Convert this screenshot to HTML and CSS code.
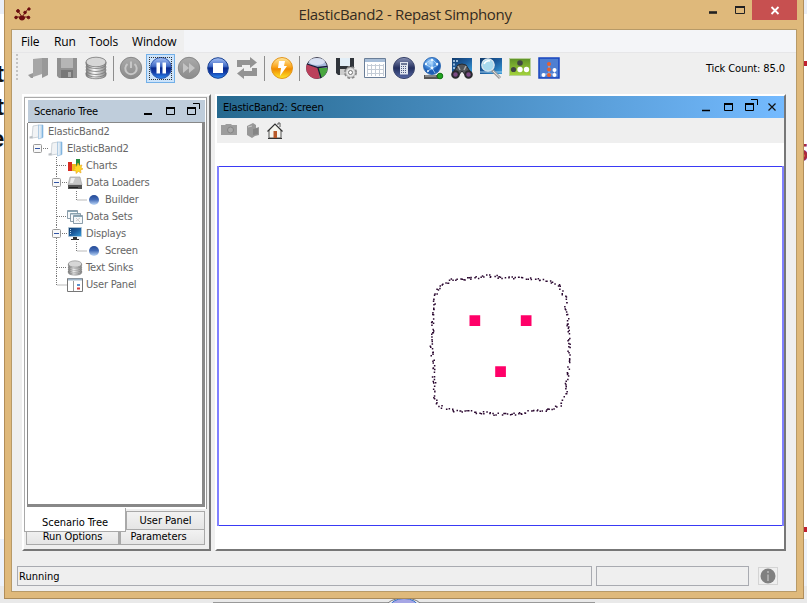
FILE: index.html
```
<!DOCTYPE html>
<html lang="en">
<head>
<meta charset="utf-8">
<title>ElasticBand2 - Repast Simphony</title>
<link rel="stylesheet" href="styles.css">
</head>
<body>
<svg width="0" height="0" class="defs">
  <defs>
    <linearGradient id="grey" x1="0" y1="0" x2="0" y2="1"><stop offset="0" stop-color="#aaa"/><stop offset="1" stop-color="#8b8b8b"/></linearGradient>
    <linearGradient id="disk" x1="0" y1="0" x2="1" y2="0"><stop offset="0" stop-color="#777"/><stop offset=".4" stop-color="#fff"/><stop offset="1" stop-color="#888"/></linearGradient>
    <linearGradient id="blue" x1="0" y1="0" x2="0" y2="1"><stop offset="0" stop-color="#a9c3f4"/><stop offset=".42" stop-color="#3f69c6"/><stop offset=".5" stop-color="#0a2a8c"/><stop offset=".7" stop-color="#1238a4"/><stop offset="1" stop-color="#2f8ff5"/></linearGradient>
    <linearGradient id="gold" x1="0" y1="0" x2="0" y2="1"><stop offset="0" stop-color="#ffe9a0"/><stop offset=".45" stop-color="#fba51c"/><stop offset=".55" stop-color="#f08a00"/><stop offset="1" stop-color="#ffe92c"/></linearGradient>
    <linearGradient id="navy" x1="0" y1="0" x2="0" y2="1"><stop offset="0" stop-color="#8891b5"/><stop offset=".5" stop-color="#24305f"/><stop offset="1" stop-color="#5668a5"/></linearGradient>
    <linearGradient id="sea" x1="0" y1="0" x2="1" y2="1"><stop offset="0" stop-color="#123c6c"/><stop offset=".5" stop-color="#1c5c9d"/><stop offset="1" stop-color="#3ba0dc"/></linearGradient>
    <linearGradient id="green" x1="0" y1="0" x2="0" y2="1"><stop offset="0" stop-color="#5e9227"/><stop offset="1" stop-color="#a4d43c"/></linearGradient>
    <linearGradient id="page" x1="0" y1="0" x2="1" y2="0"><stop offset="0" stop-color="#f3f5f7"/><stop offset=".6" stop-color="#cfe2f2"/><stop offset="1" stop-color="#5fa4dc"/></linearGradient>
    <linearGradient id="ball" x1="0" y1="0" x2="0" y2="1"><stop offset="0" stop-color="#234a96"/><stop offset=".45" stop-color="#4169b5"/><stop offset="1" stop-color="#c2dcfa"/></linearGradient>
    <radialGradient id="globe" cx=".4" cy=".3"><stop offset="0" stop-color="#b6ddff"/><stop offset=".6" stop-color="#4c92e0"/><stop offset="1" stop-color="#1c5cb4"/></radialGradient>
    <symbol id="folder" viewBox="0 0 16 16"><path d="M4 2 10 1V13L3 14z" fill="#f1f3f5" stroke="#bcc4cb" stroke-width=".7"/><path d="M.5 12.500 3.500 12v2.500h-3z" fill="#b9bec3"/><path d="M9.500 1h4.500v12.500L9.500 15z" fill="url(#page)" stroke="#8ab5da" stroke-width=".6"/></symbol>
    <symbol id="bead" viewBox="0 0 12 12"><circle cx="6" cy="6" r="5" fill="url(#ball)"/></symbol>
    <symbol id="stack" viewBox="0 0 24 24"><g fill="url(#disk)" stroke="#777" stroke-width=".8"><path d="M2 17v2c0 5 20 5 20 0v-2z"/><ellipse cx="12" cy="17" rx="10" ry="4"/><ellipse cx="12" cy="14" rx="10" ry="4.5"/><ellipse cx="12" cy="11" rx="10" ry="4.5"/><path d="M2 6v2c0 6 20 6 20 0V6z"/><ellipse cx="12" cy="6" rx="10" ry="4.8" fill="#d7d7d7"/></g></symbol>
    <symbol id="restore" viewBox="0 0 14 14"><path d="M.5 4.500h8v7h-8z" fill="none" stroke="#000"/><path d="M0 5h9" stroke="#000" stroke-width="2"/><path d="M6 .5h6.500V6" fill="none" stroke="#000"/></symbol>
  </defs>
</svg>

<div class="behind">
  <span class="scrap s1">t</span><span class="scrap s2">t</span><span class="scrap s3">e</span>
  <span class="scrap s4">5</span><i class="dash d1"></i><i class="dash d2"></i>
  <i class="sheet"></i>
  <svg class="orb" width="40" height="5"><ellipse cx="20" cy="9" rx="18" ry="9" fill="#ececf0" stroke="#777"/><ellipse cx="20" cy="9" rx="14" ry="8.5" fill="#a6a6e5" stroke="#3975c8"/></svg>
</div>

<div class="window">
  <header class="titlebar">
    <svg class="logo" width="18" height="15" viewBox="0 0 18 15"><g fill="#6b0d10" stroke="#6b0d10"><path d="M8 10 4 4M8 10 14 2M8 10H2M8 10h7" fill="none"/><circle cx="4" cy="4" r="1.4"/><circle cx="15" cy="2" r="1.2"/><circle cx="11" cy="5.5" r="1.3"/><circle cx="2" cy="10.5" r="1.3"/><ellipse cx="8" cy="11" rx="2.6" ry="2"/><circle cx="14.5" cy="10.5" r="1.3"/></g></svg>
    <h1>ElasticBand2 - Repast Simphony</h1>
    <div class="wincontrols">
      <svg width="46" height="20"><path d="M5 12.500h8" stroke="#222" stroke-width="2.600"/><path d="M31.500 7h9v6.500h-9z" fill="none" stroke="#222"/><path d="M31 7h10" stroke="#222" stroke-width="2"/></svg>
      <span class="close"><svg width="45" height="20"><path d="m19.500 7 7 7m0-7-7 7" stroke="#fff" stroke-width="1.800"/></svg></span>
    </div>
  </header>

  <div class="client">
    <nav class="menubar"><span class="m1">File</span><span class="m2">Run</span><span class="m3">Tools</span><span class="m4">Window</span></nav>

    <div class="toolbar">
      <i class="grip"></i>
      <svg class="tool" viewBox="0 0 24 24"><path d="M7 3 16 2v16L7 21z" fill="#a6a6a6"/><path d="M2 19l5-2v5H5zM16 2h6v17l-6 3z" fill="#999"/></svg>
      <svg class="tool" viewBox="0 0 24 24"><path d="M2 2h20v20H4l-2-2z" fill="#919191"/><path d="M6 2h12v10H6z" fill="#b5b5b5"/><path d="M6 14h12v8H6z" fill="#777"/><path d="M13 16h3v5h-3z" fill="#aaa"/></svg>
      <svg class="tool"><use href="#stack"/></svg>
      <i class="sep"></i>
      <svg class="tool" viewBox="0 0 24 24"><circle cx="12" cy="12" r="10.7" fill="url(#grey)" stroke="#888"/><path d="M8.500 8a5.700 5.700 0 1 0 7 0M12 5.500V12" fill="none" stroke="#c7c7c7" stroke-width="2"/></svg>
      <span class="pressed"><svg class="glyph" viewBox="0 0 24 24"><circle cx="12" cy="12" r="10.5" fill="url(#blue)" stroke="#3059b0"/><path d="M7.500 6.500H11v11H7.500zM13.500 6.500H17v11h-3.500z" fill="#fff"/></svg></span>
      <svg class="tool" viewBox="0 0 24 24"><circle cx="12" cy="12" r="10.7" fill="url(#grey)" stroke="#888"/><path d="m6 7 6 5-6 5zm6 0 6 5-6 5z" fill="#c4c4c4"/></svg>
      <svg class="tool" viewBox="0 0 24 24"><circle cx="12" cy="12" r="10.3" fill="url(#blue)" stroke="#1a4394"/><path d="M7 7h10v10H7z" fill="#fff"/></svg>
      <svg class="tool" viewBox="0 0 24 24"><path d="M2 11V4h13V1l7 5.500-7 5.500V9H7v2zM22 12v8H9v3l-7-5.500L9 12v3h8v-3z" fill="#939393"/></svg>
      <i class="sep"></i>
      <svg class="tool" viewBox="0 0 24 24"><circle cx="12" cy="12" r="10.5" fill="url(#gold)" stroke="#e3951d"/><path d="M9 5h6l-1 5h3l-7 10 1-8H8z" fill="#fff"/></svg>
      <i class="sep"></i>
      <svg class="tool" viewBox="0 0 24 24"><circle cx="12" cy="12" r="10.500" fill="#a8b9dc" stroke="#445"/><path d="M13 12 2 8a10.500 10.500 0 0 0 13 14z" fill="#bb405b"/><path d="M13 12h9.500A10.500 10.500 0 0 1 15 22z" fill="#48a63e"/><path d="M2 8l11 3.500 9.500-1M13 12l3 10" fill="none" stroke="#151a35" stroke-width="1.300"/><ellipse cx="12" cy="5.500" rx="8" ry="3.500" fill="#e4eaf8" opacity=".8"/></svg>
      <svg class="tool" viewBox="0 0 24 24"><path d="M2 2h18v17H4l-2-2z" fill="#30343a"/><path d="M6 2h10v8H6z" fill="#e2eef7"/><path d="M6 13h9v6H6z" fill="#ccc"/><g transform="translate(16.500 16.500)"><circle r="5.500" fill="#ddd" stroke="#888" stroke-width="2" stroke-dasharray="2.700 1.700"/><circle r="4.800" fill="#e5e5e5" stroke="#999" stroke-width=".7"/><circle r="2" fill="#fff" stroke="#777"/></g></svg>
      <svg class="tool" viewBox="0 0 24 24"><path d="M1.500 2.500h21v19h-21z" fill="#fff" stroke="#6a7e98"/><path d="M2 3h20v3H2z" fill="#a7bdd7"/><path d="M4 9.500h16M4 13.500h16M4 17.500h16M4.500 8v12M8.500 8v12M12.500 8v12M16.500 8v12M20.500 8v12" stroke="#c4ccd6"/></svg>
      <svg class="tool" viewBox="0 0 24 24"><circle cx="12" cy="12" r="10.600" fill="url(#navy)" stroke="#3c466c"/><path d="M8 6h8v12.500H8z" fill="#e0e5ef"/><path d="M9 8h6" stroke="#6d7897" stroke-width="2"/><path d="M9.500 10v8M11.500 10v8M13.500 10v8" stroke="#4b587f" stroke-dasharray="1 1"/></svg>
      <svg class="tool" viewBox="0 0 24 24"><circle cx="11" cy="10" r="8.500" fill="url(#globe)" stroke="#356fb6"/><path d="M4 8 11 3l6 6-6 3-5 4M4 8l7 4M11 3v9l3 5" fill="none" stroke="#c6e5ff" stroke-width=".7"/><g fill="#eaf6ff"><circle cx="11" cy="4" r="1.200"/><circle cx="5" cy="8" r="1.200"/><circle cx="16" cy="8" r="1.300"/><circle cx="11" cy="12" r="1.400"/><circle cx="7" cy="15" r="1"/></g><path d="M3 19h15v4H3z" fill="#555"/><path d="M4 20h11" stroke="#bbb"/><circle cx="19" cy="20" r="2.800" fill="#20a31f" stroke="#117211"/></svg>
      <svg class="tool" viewBox="0 0 24 24"><path d="M2 2h20v14H2z" fill="url(#sea)"/><path d="M4 4v10M7 4v2" stroke="#c2ddf3" stroke-width="1.500" stroke-dasharray="2 1.500"/><path d="m8 9 4-1 4 1 5 8-5 3-4-5-4 5-5-3z" fill="#52565b" stroke="#2a2b2d"/><path d="m8 10 2 4m6-4-2 4" stroke="#aaa" stroke-width="1.500"/><circle cx="5.500" cy="18.500" r="3.300" fill="#7b4b84" stroke="#29292e" stroke-width="2"/><circle cx="18.500" cy="18.500" r="3.300" fill="#7b4b84" stroke="#29292e" stroke-width="2"/></svg>
      <svg class="tool" viewBox="0 0 24 24"><path d="M1 2h22v16H1z" fill="url(#sea)"/><path d="M1 16h22" stroke="#a3cce9"/><path d="m13 14 8 8" stroke="#999" stroke-width="3"/><path d="m14 15 7 6.500" stroke="#e8e8e8"/><circle cx="9" cy="9" r="6.200" fill="#a9daee" stroke="#dde7ee" stroke-width="1.300"/><path d="M5 8q2-4 6-3" fill="none" stroke="#fff" stroke-width="1.500"/></svg>
      <svg class="tool" viewBox="0 0 24 24"><rect x="1.500" y="2.500" width="21" height="17" fill="url(#green)" stroke="#b8cf9b"/><circle cx="12" cy="7" r="2.800" fill="#414743"/><circle cx="5.500" cy="13.500" r="2.600" fill="#414743"/><circle cx="12" cy="13.500" r="2.700" fill="#fff"/><circle cx="18.500" cy="13.500" r="2.700" fill="#fff"/></svg>
      <svg class="tool" viewBox="0 0 24 24"><path d="M2 2h20v20H2z" fill="#4f7fd1" stroke="#1744bf" stroke-width="1.500"/><path d="M12 8v12M6.500 18h11V12" fill="none" stroke="#9fbcec"/><g fill="#e8602e"><circle cx="12" cy="8" r="2"/><circle cx="12" cy="13.500" r="2"/><circle cx="12" cy="19" r="2"/></g><g fill="#fff"><circle cx="6.500" cy="19" r="2"/><circle cx="17.500" cy="14" r="2"/><circle cx="17.500" cy="19" r="2"/></g></svg>
      <span class="ticks">Tick Count: 85.0</span>
    </div>

    <main class="workspace">
      <section class="sidebar">
        <div class="treeframe">
          <div class="treehead"><span>Scenario Tree</span>
            <svg width="60" height="16"><path d="M2 11h8" stroke="#000" stroke-width="2"/><path d="M24.500 4.500h8v7h-8z" fill="none" stroke="#000"/><path d="M24 5h9" stroke="#000" stroke-width="2"/><use href="#restore" x="45" y="0" width="14" height="14"/></svg>
          </div>
          <div class="tree">
            <div class="row root"><svg width="16" height="16"><use href="#folder"/></svg><span>ElasticBand2</span></div>
            <div class="row"><svg class="guide g1"><path class="dots" d="M15 8.500h6"/><rect x="5.500" y="4.500" width="8" height="8" rx="1"/><path class="minus" d="M7 8.500h5"/></svg><svg width="16" height="16"><use href="#folder"/></svg><span>ElasticBand2</span></div>
            <div class="row"><svg class="guide g2"><path class="dots" d="M28.500 0v17M29 8.500h9"/></svg><svg width="16" height="16"><path d="M1 4h4v9H1z" fill="#d82b21"/><path d="M5 6h4v7H5z" fill="#efbb20"/><path d="M9 1h4v12H9z" fill="#278b41"/><path d="m11 5 1.300 2.500L15 7l-1 2.500 2 1.500-2.500 1 .5 3-2.500-1.500L9 15.500V13l-3-.5L8 10.500 7 8l2.600.3z" fill="#ffd928" stroke="#e7a520" stroke-width=".6"/></svg><span>Charts</span></div>
            <div class="row"><svg class="guide g2"><path class="dots" d="M28.500 0v4M28.500 13v4M34 8.500h5"/><rect x="24.500" y="4.500" width="8" height="8" rx="1"/><path class="minus" d="M26 8.500h5"/></svg><svg width="16" height="16"><path d="M3 2h10l2 8H1z" fill="#c6c6c6" stroke="#999" stroke-width=".6"/><path d="M4 3h4l-2 5H3z" fill="#eee"/><path d="M1 10h14v4H1z" fill="#555"/><path d="M2 12.500h9" stroke="#222"/></svg><span>Data Loaders</span></div>
            <div class="row"><svg class="guide g3"><path class="dots" d="M28.500 0v17M48.500 0v9h10"/></svg><svg width="12" height="12"><use href="#bead"/></svg><span class="leaf">Builder</span></div>
            <div class="row"><svg class="guide g2"><path class="dots" d="M28.500 0v17M29 8.500h9"/></svg><svg width="16" height="16"><g fill="#f5f8fa" stroke="#6e8595" stroke-width=".8"><path d="M.5 1.500h10v8H.5z"/><path d="M3.500 4.500h10v8h-10z"/><path d="M6.500 6.500h9v8h-9z"/></g><path d="M1 2.500h9M4 5h9M7 7.500h8" stroke="#88a6b5"/><path d="m9 12 4-3m-4 0 4 4" stroke="#ccc"/></svg><span>Data Sets</span></div>
            <div class="row"><svg class="guide g2"><path class="dots" d="M28.500 0v4M28.500 13v4M34 8.500h5"/><rect x="24.500" y="4.500" width="8" height="8" rx="1"/><path class="minus" d="M26 8.500h5"/></svg><svg width="16" height="16"><path d="M1.500 1.500h13v9h-13z" fill="url(#sea)" stroke="#b7cbd7" stroke-width=".7"/><path d="M3.500 3v6" stroke="#b8daf2" stroke-dasharray="1 1"/><path d="M6 11h4v2h2v1H4v-1h2z" fill="#333"/></svg><span>Displays</span></div>
            <div class="row"><svg class="guide g3"><path class="dots" d="M28.500 0v17M48.500 0v9h10"/></svg><svg width="12" height="12"><use href="#bead"/></svg><span class="leaf">Screen</span></div>
            <div class="row"><svg class="guide g2"><path class="dots" d="M28.500 0v17M29 8.500h9"/></svg><svg width="16" height="16"><use href="#stack"/></svg><span>Text Sinks</span></div>
            <div class="row"><svg class="guide g2"><path class="dots" d="M28.500 0v9h10"/></svg><svg width="16" height="16"><path d="M.5 1.500h15v13H.5z" fill="#fff" stroke="#777"/><path d="M1 2.500h14" stroke="#9eb4c8" stroke-width="2"/><path d="M6.500 4v10" stroke="#999"/><path d="M10 7h3v2h-3z" fill="#5a93d0"/><path d="M10 10.500h3v2h-3z" fill="#d73b3b"/></svg><span>User Panel</span></div>
          </div>
        </div>
        <div class="tabs">
          <span class="tab active">Scenario Tree</span><span class="tab user">User Panel</span>
          <span class="tab run">Run Options</span><span class="tab params">Parameters</span>
        </div>
      </section>

      <section class="screen">
        <div class="screenhead"><span>ElasticBand2: Screen</span>
          <svg width="82" height="16"><path d="M3 11.500h8" stroke="#000" stroke-width="1.500"/><path d="M25.500 4.500h8v7h-8z" fill="none" stroke="#000"/><path d="M25 5h9" stroke="#000" stroke-width="2"/><use href="#restore" x="46" y="0" width="14" height="14"/><path d="m69.500 4.500 7 7m0-7-7 7" stroke="#111" stroke-width="1.200"/></svg>
        </div>
        <div class="screentools">
          <svg width="18" height="18"><path d="M1 3h4l1-1h5l1 1h5v10H1z" fill="#9d9d9d"/><circle cx="10.500" cy="8" r="3" fill="#aaa" stroke="#858585"/></svg>
          <svg width="18" height="18"><path d="m4 4 6-3 3 2v3l3-1v8l-4 1-3 2-5-3z" fill="#989898"/><path d="m10 7 5-1v6l-5 1z" fill="#858585"/><path d="m5 5 4-1" stroke="#ccc"/></svg>
          <svg width="18" height="18"><path d="M3 8v8h12V8L9 2z" fill="#f5f5ef" stroke="#555"/><path d="M1.500 9.500 9 2l7.500 7.500" fill="none" stroke="#333" stroke-width="1.200"/><path d="M12 3V1h2v4" fill="#fff" stroke="#555"/><path d="M7.500 9h3.500v7H7.500z" fill="#b85a2a"/><path d="M2 16.500h14" stroke="#333"/></svg>
        </div>
        <div class="display">
          <svg class="canvas" width="567" height="361" viewBox="217 165 567 361">
            <path d="M217 166.500h566M217 525.500h566" stroke="#3a3af5"/><path d="M218 166v360M783 166v360" stroke="#8080ff" stroke-width="2"/>
            <path id="band" fill="#2b0830"/>
            <g fill="#ff0068"><path d="M469.500 315.300h10.700v10.700h-10.700zM520.800 315.300h10.700v10.700h-10.700zM495.200 366.300h10.700v10.700h-10.700z"/></g>
          </svg>
        </div>
      </section>
    </main>

    <footer class="status"><span class="message">Running</span><span class="extra"></span><span class="info"><svg width="18" height="16"><circle cx="9" cy="8" r="7.500" fill="#808080"/><path d="M9 6.500V13M9 3v2" stroke="#aaa" stroke-width="2"/></svg></span></footer>
  </div>
</div>
<script src="band.js"></script>
</body>
</html>
```
FILE: styles.css
```
* { box-sizing: border-box; }
body { margin: 0; width: 807px; height: 603px; overflow: hidden; position: relative; background: linear-gradient(#e9eef8 14px, #fff 14px 539px, #edf2fa 539px 586px, #e9e9e9 586px); font: 11px/17px "DejaVu Sans Condensed", "DejaVu Sans", sans-serif; color: #000; }
svg { display: block; flex: none; }
.defs { position: absolute; }
.behind { position: absolute; inset: 0; overflow: hidden; }
.scrap { position: absolute; font: bold 24px/24px "Liberation Sans", sans-serif; color: #111; }
.s1 { left: -4px; top: 62px; }
.s2 { left: -4px; top: 95px; }
.s3 { left: -9px; top: 127px; }
.s4 { left: 795px; top: 141px; color: #a92a3c; }
.dash { position: absolute; left: 803px; width: 5px; height: 5px; background: #c02030; }
.d1 { top: 61px; }
.d2 { top: 527px; }
.sheet { position: absolute; left: 213px; top: 602px; width: 382px; height: 1px; background: #999; }
.orb { position: absolute; left: 384px; top: 598px; }

.window { position: relative; width: 800px; height: 599px; margin-left: 4px; padding: 0 7px 7px; background: #dfb97b; border: solid #b28e5a; border-width: 0 1px 1px; border-bottom-color: #a98a5a; }
.titlebar { height: 29px; display: flex; align-items: flex-start; justify-content: space-between; }
.logo { margin: 7px 0 0 2px; }
h1 { margin: 3px 0 0 74px; font: 15px/22px "Open Sans", "Noto Sans", sans-serif; letter-spacing: -.33px; color: #332b22; white-space: nowrap; }
.wincontrols { display: flex; }
.wincontrols > svg { margin-right: 2px; }
.close { background: #c75050; height: 20px; margin-right: -1px; }
.client { width: 786px; height: 563px; margin-left: -1px; border: 1px solid #b79a68; background: #efefef; display: flex; flex-direction: column; }

.menubar { height: 23px; flex: none; display: flex; align-items: center; background: linear-gradient(90deg, #efefef 172px, #f4f5f8 172px); border-bottom: 1px solid #e6e6e8; font: 12px/22px "Open Sans", "Noto Sans", sans-serif; letter-spacing: -.15px; padding: 2px 0 0 9px; }
.m1 { width: 33px; }
.m2 { width: 35px; }
.m3 { width: 43px; }
.toolbar { height: 30px; flex: none; display: flex; align-items: center; padding-right: 11px; }
.grip { width: 2px; height: 28px; margin: 0 6px 0 4px; background: repeating-linear-gradient(#c3c3c3 0 2px, transparent 2px 4px); }
.tool { width: 24px; height: 24px; margin: 0 3px 0 2px; }
.glyph { width: 24px; height: 24px; }
.sep { width: 1px; height: 25px; margin: 0 3px 0 2px; background: #8d8d8d; }
.pressed { width: 29px; height: 29px; border: 1px solid #73b0e8; background: #cce3fa; display: grid; place-items: center; outline: 1px dotted #333; outline-offset: -4px; }
.ticks { margin-left: auto; white-space: nowrap; letter-spacing: -.1px; }

.workspace { display: flex; gap: 4px; padding: 11px 0 0 10px; height: 468px; flex: none; }
.sidebar { width: 189px; height: 457px; border: 2px solid #fff; border-right-color: #777; border-bottom-color: #777; }
.treeframe { height: 412px; width: 183px; margin-top: 1px; border: 1px solid #aaa; border-right-color: #999; border-bottom: 0; background: #fff; padding: 2px 2px 0 3px; }
.treehead { height: 23px; width: 177px; background: #bfcddb; border-bottom: 1px solid #888; display: flex; align-items: center; justify-content: space-between; padding: 0 3px 0 6px; letter-spacing: -.2px; }
.tree { height: 384px; width: 178px; border: solid #888; border-width: 0 3px 3px 1px; margin-left: -1px; color: #666; letter-spacing: -.2px; }
.row { height: 17px; display: flex; align-items: center; }
.row span { margin-left: 3px; white-space: nowrap; }
.row.root { padding-left: 1px; }
.row .leaf { margin-left: 5px; }
.guide { height: 17px; }
.guide rect { fill: #f8f8f8; stroke: #999; }
.dots { fill: none; stroke: #777; stroke-dasharray: 1 1; }
.minus { stroke: #3155a5; }
.g1 { width: 20px; }
.g2 { width: 39px; }
.g3 { width: 60px; }
.tabs { display: grid; grid-template-columns: 95px 7px 78px; grid-template-rows: 1px 19px 15px; width: 180px; margin-top: 1px; letter-spacing: -.05px; }
.tab { text-align: center; border: 1px solid #a9a9a9; background: linear-gradient(#f2f2f2, #e5e5e5); overflow: hidden; }
.active { grid-area: 1 / 1 / 3 / 3; background: #fff; border-top: 0; height: 24px; line-height: 29px; z-index: 1; margin-top: -2px; }
.user { grid-area: 2 / 3; margin-right: -1px; }
.run { grid-area: 3 / 1; margin-left: 2px; line-height: 13px; border-top: 0; }
.params { grid-area: 3 / 2 / 4 / 4; margin-right: -1px; line-height: 13px; border-top: 0; border-left-width: 2px; padding-right: 8px; }

.screen { width: 571px; height: 457px; background: #fff; border: 2px solid #fff; border-right-color: #777; border-bottom-color: #777; }
.screenhead { height: 22px; background: linear-gradient(90deg, #26698f, #74baff); display: flex; align-items: center; justify-content: space-between; padding: 0 3px 0 6px; letter-spacing: -.2px; }
.screentools { height: 25px; background: #efefef; display: flex; gap: 5px; align-items: center; padding-left: 3px; }
.display { padding-top: 22px; }

.status { display: flex; height: 20px; margin: 15px 0 0 5px; gap: 4px; }
.message, .extra { border: 1px solid #a9abb1; line-height: 19px; padding-left: 1px; }
.message { width: 575px; }
.extra { width: 153px; }
.info { width: 20px; height: 18px; margin: 1px 0 0 5px; border: 1px solid #d4d4d4; }
```
FILE: band.js
```
// Agents of the elastic band, scattered along a closed outline.
const outline = [[441,285],[455,279],[470,279],[489,276],[507,277.5],[525,279],[541,280],[559,284],[565,297],[567.5,315],[569,332],[569.5,352],[567.5,372],[566,392],[561,405],[547,410],[530,412],[513,414.5],[490,413.5],[470,411.5],[450,410],[440,406],[435,398],[434,378],[433,362],[431.5,348],[432.5,325],[433.5,308],[436,293]];
let seed = 17;
const random = () => (seed = (seed * 16807) % 2147483647) / 2147483647;
let d = "";
outline.forEach(([x, y], i) => {
  const [nx, ny] = outline[(i + 1) % outline.length];
  const count = Math.round(Math.hypot(nx - x, ny - y) / 2);
  for (let k = 0; k < count; k++) {
    const t = (k + random()) / count;
    const px = x + (nx - x) * t + (random() - 0.5) * 3;
    const py = y + (ny - y) * t + (random() - 0.5) * 3;
    d += `M${(px - 0.7).toFixed(1)} ${(py - 0.7).toFixed(1)}h1.5v1.5h-1.5z`;
  }
});
document.getElementById("band").setAttribute("d", d);
```
